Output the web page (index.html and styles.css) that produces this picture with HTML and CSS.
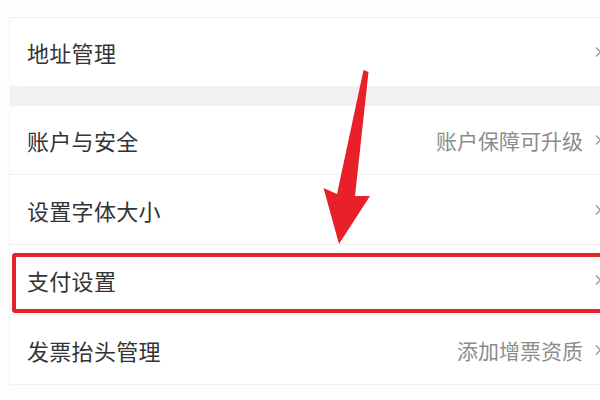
FILE: index.html
```html
<!DOCTYPE html>
<html lang="zh-CN">
<head>
<meta charset="utf-8">
<link rel="stylesheet" href="styles.css">
</head>
<body>
<div class="screen">
  <div class="top-space"></div>
  <div class="card card-first">
    <div class="row"><span class="label">地址管理</span><span class="right"><svg class="chev" viewBox="0 0 5 12"><path d="M1 1.5 L5.5 6 L1 10.5" /></svg></span></div>
  </div>
  <div class="band"></div>
  <div class="card card-second">
    <div class="row row-first"><span class="label">账户与安全</span><span class="right"><span class="hint">账户保障可升级</span><svg class="chev" viewBox="0 0 5 12"><path d="M1 1.5 L5.5 6 L1 10.5" /></svg></span></div>
    <div class="row"><span class="label">设置字体大小</span><span class="right"><svg class="chev" viewBox="0 0 5 12"><path d="M1 1.5 L5.5 6 L1 10.5" /></svg></span></div>
    <div class="row"><span class="label">支付设置</span><span class="right"><svg class="chev" viewBox="0 0 5 12"><path d="M1 1.5 L5.5 6 L1 10.5" /></svg></span></div>
    <div class="row"><span class="label">发票抬头管理</span><span class="right"><span class="hint">添加增票资质</span><svg class="chev" viewBox="0 0 5 12"><path d="M1 1.5 L5.5 6 L1 10.5" /></svg></span></div>
  </div>
  <div class="highlight"></div>
  <svg class="arrow" viewBox="0 0 600 400" width="600" height="400">
    <polygon points="363.5,70 368.5,72 355,196 370,196 339,244 323.5,188 337,194" />
  </svg>
</div>
</body>
</html>
```

FILE: styles.css
```css
html, body {
  margin: 0;
  padding: 0;
  background: #ffffff;
  overflow: hidden;
  width: 600px;
  height: 400px;
}

.screen {
  position: relative;
  width: 600px;
  height: 400px;
  padding-left: 10px;
  box-sizing: border-box;
  background: #fdfdfd;
  overflow: hidden;
  font-family: "Noto Sans CJK SC", "Noto Sans", sans-serif;
}

.top-space {
  height: 17px;
}

.card {
  background: #ffffff;
}

.card-first {
  border-top: 1px solid #efefef;
  border-bottom-left-radius: 10px;
  box-shadow: -1px 0 0 #f4f4f4;
}

.card-second {
  border-top-left-radius: 8px;
  box-shadow: -1px 0 0 #f6f6f6;
}

.band {
  height: 20px;
  background: #f1f1f1;
}

.row {
  height: 70px;
  display: flex;
  align-items: center;
  justify-content: space-between;
  padding-left: 17px;
  padding-right: 0;
  border-bottom: 1px solid #f0f0f0;
  box-sizing: border-box;
}

.card-first .row {
  height: 68px;
  border-bottom: none;
}

.row-first {
  height: 69px;
}

.label {
  font-size: 22px;
  color: #333333;
  letter-spacing: 0.3px;
}

.right {
  display: flex;
  align-items: center;
  gap: 12px;
}

.hint {
  font-size: 21px;
  color: #8c8c8c;
}

.chev {
  width: 5px;
  height: 12px;
  fill: none;
  stroke: #9a9a9a;
  stroke-width: 1.4;
}

.highlight {
  position: absolute;
  left: 12px;
  top: 253px;
  width: 588px;
  height: 60px;
  border: 4px solid #e5222b;
  border-right: none;
  border-radius: 4px 0 0 4px;
  box-sizing: border-box;
}

.arrow {
  position: absolute;
  left: 0;
  top: 0;
}

.arrow polygon {
  fill: #e8202a;
}
```
